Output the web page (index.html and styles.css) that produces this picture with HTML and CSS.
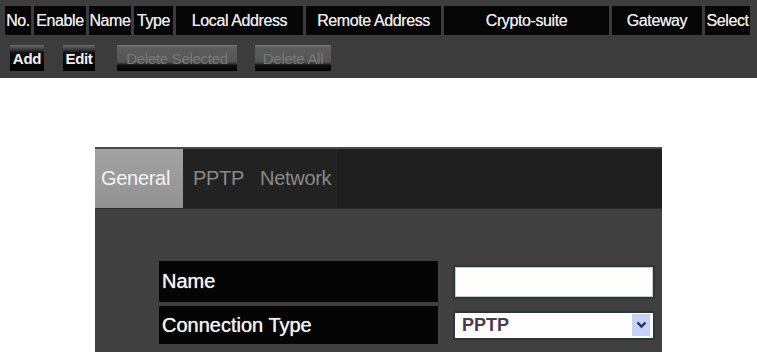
FILE: index.html
```html
<!DOCTYPE html>
<html>
<head>
<meta charset="utf-8">
<link rel="stylesheet" href="styles.css">
</head>
<body>
<div class="top">
  <div class="thead">
    <div class="th w-no">No.</div>
    <div class="th w-en">Enable</div>
    <div class="th w-name">Name</div>
    <div class="th w-type">Type</div>
    <div class="th w-local">Local Address</div>
    <div class="th w-remote">Remote Address</div>
    <div class="th w-crypto">Crypto-suite</div>
    <div class="th w-gw">Gateway</div>
    <div class="th w-sel">Select</div>
  </div>
  <div class="btns">
    <button class="btn b-add">Add</button>
    <button class="btn b-edit">Edit</button>
    <button class="btn dis b-dsel">Delete Selected</button>
    <button class="btn dis b-dall">Delete All</button>
  </div>
</div>

<div class="dialog">
  <div class="tabs">
    <div class="tab active">General</div>
    <div class="tab t-pptp">PPTP</div>
    <div class="tab t-net">Network</div>
  </div>
  <div class="body">
    <div class="row r1">
      <div class="label">Name</div>
      <div class="field"><div class="input"></div></div>
    </div>
    <div class="row r2">
      <div class="label">Connection Type</div>
      <div class="field">
        <div class="select"><span>PPTP</span>
          <span class="arrow"><svg width="11" height="8" viewBox="0 0 11 8"><path d="M1.5 1.5 L5.5 5.5 L9.5 1.5" fill="none" stroke="#1f2f6f" stroke-width="2.4"/></svg></span>
        </div>
      </div>
    </div>
  </div>
</div>
</body>
</html>
```
FILE: styles.css
```css
html, body { margin: 0; padding: 0; background: #fff; }
body { font-family: "Liberation Sans", Arial, sans-serif; width: 757px; height: 352px; overflow: hidden; }

.top { background: #3c3c3c; height: 78px; padding: 6px 0 0 5px; box-sizing: border-box; }
.thead { display: flex; gap: 3px; height: 29px; }
.th { background: #060606; color: #e8e8e8; font-size: 16px; display: flex; align-items: center; justify-content: center; white-space: nowrap; letter-spacing: -0.4px; text-shadow: 0 0 0.6px #e8e8e8; }
.w-no { width: 26px; }
.w-en { width: 52px; }
.w-name { width: 42px; }
.w-type { width: 39px; }
.w-local { width: 127px; }
.w-remote { width: 135px; }
.w-crypto { width: 165px; }
.w-gw { width: 90px; }
.w-sel { width: 45px; }

.btns { display: flex; margin: 10px 0 0 5px; height: 26px; }
.btn { font-family: "Liberation Sans", Arial, sans-serif; font-size: 15px; font-weight: bold; color: #f2f2f2; border: 0; padding: 0; height: 26px; display: flex; align-items: center; justify-content: center; background: linear-gradient(#6a6a6a 0, #4a4a4a 12%, #101010 30%, #000 100%); letter-spacing: -0.3px; }
.btn.dis { color: #7a7a7a; font-weight: normal; background: linear-gradient(#777 0, #5c5c5c 10%, #555 65%, #111 78%, #000 100%); }
.b-add { width: 34px; }
.b-edit { width: 32px; margin-left: 19px; }
.b-dsel { width: 120px; margin-left: 22px; }
.b-dall { width: 76px; margin-left: 18px; }

.dialog { margin: 69px 0 0 95px; width: 567px; height: 205px; background: #404040; }
.tabs { display: flex; height: 62px; background: #1e1e1e; border-top: 2px solid #4a4a4a; box-sizing: border-box; border-bottom: 1px solid #2a2a2a; }
.tab { font-size: 20px; color: #8a8a8a; display: flex; align-items: center; background: #222; letter-spacing: -0.3px; }
.tab.active { background: linear-gradient(#a2a2a2, #929292); color: #f4f4f4; width: 88px; padding-left: 6px; box-sizing: border-box; }
.t-pptp { padding: 0 8px 0 10px; }
.t-net { padding: 0 6px 0 8px; }

.body { padding: 52px 0 0 64px; }
.row { display: flex; align-items: center; }
.r1 { height: 41px; }
.r2 { height: 38px; margin-top: 4px; }
.label { width: 279px; height: 100%; background: #050505; color: #f0f0f0; font-size: 20px; display: flex; align-items: center; padding-left: 3px; box-sizing: border-box; white-space: nowrap; text-shadow: 0 0 0.8px #f0f0f0; }
.field { margin-left: 15px; width: 202px; }
.input { height: 34px; background: #fdfdfb; border: 2px solid #2c3838; box-shadow: inset 0 0 0 1px #c8ccd0; box-sizing: border-box; }
.select { height: 29px; background: #fdfdfd; border: 2px solid #2c3838; box-sizing: border-box; display: flex; align-items: center; justify-content: space-between; padding-left: 7px; font-size: 18px; color: #4a3a50; font-weight: bold; }
.arrow { width: 18px; height: 22px; background: #c6d3f4; display: flex; align-items: center; justify-content: center; margin-right: 3px; }
.arrow svg { display: block; }
```
